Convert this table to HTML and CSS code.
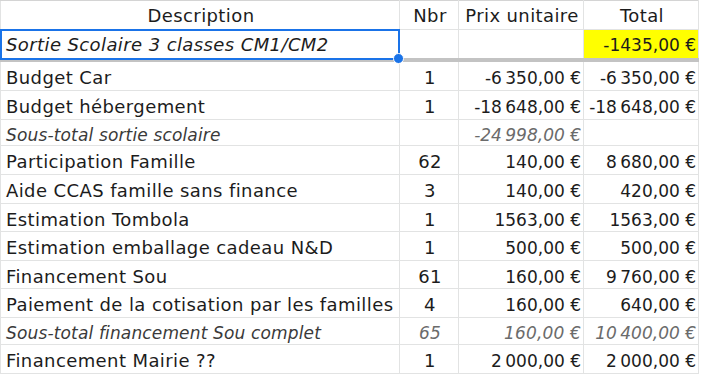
FILE: index.html
```html
<!DOCTYPE html>
<html lang="fr">
<head>
<meta charset="utf-8">
<link rel="stylesheet" href="styles.css">
</head>
<body>
<table class="sheet">
  <colgroup>
    <col class="c-desc"><col class="c-nbr"><col class="c-prix"><col class="c-total">
  </colgroup>
  <tr class="head">
    <td class="center">Description</td><td class="center">Nbr</td><td class="center">Prix unitaire</td><td class="center">Total</td>
  </tr>
  <tr class="first">
    <td class="sel it">Sortie Scolaire 3 classes CM1/CM2<span class="handle"></span></td><td></td><td></td><td class="num yellow">-1435,00 €</td>
  </tr>
  <tr class="row"><td>Budget Car</td><td class="center">1</td><td class="num">-6&#8239;350,00 €</td><td class="num">-6&#8239;350,00 €</td></tr>
  <tr class="row"><td>Budget hébergement</td><td class="center">1</td><td class="num">-18&#8239;648,00 €</td><td class="num">-18&#8239;648,00 €</td></tr>
  <tr class="sub"><td class="it">Sous-total sortie scolaire</td><td></td><td class="num it grey">-24&#8239;998,00 €</td><td></td></tr>
  <tr class="row"><td>Participation Famille</td><td class="center">62</td><td class="num">140,00 €</td><td class="num">8&#8239;680,00 €</td></tr>
  <tr class="row"><td>Aide CCAS famille sans finance</td><td class="center">3</td><td class="num">140,00 €</td><td class="num">420,00 €</td></tr>
  <tr class="row short"><td>Estimation Tombola</td><td class="center">1</td><td class="num">1563,00 €</td><td class="num">1563,00 €</td></tr>
  <tr class="row"><td>Estimation emballage cadeau N&amp;D</td><td class="center">1</td><td class="num">500,00 €</td><td class="num">500,00 €</td></tr>
  <tr class="row short"><td>Financement Sou</td><td class="center">61</td><td class="num">160,00 €</td><td class="num">9&#8239;760,00 €</td></tr>
  <tr class="row"><td>Paiement de la cotisation par les familles</td><td class="center">4</td><td class="num">160,00 €</td><td class="num">640,00 €</td></tr>
  <tr class="sub tall"><td class="it">Sous-total financement Sou complet</td><td class="center it grey">65</td><td class="num it grey">160,00 €</td><td class="num it grey">10&#8239;400,00 €</td></tr>
  <tr class="row"><td>Financement Mairie ??</td><td class="center">1</td><td class="num">2&#8239;000,00 €</td><td class="num">2&#8239;000,00 €</td></tr>
</table>
</body>
</html>
```
FILE: styles.css
```css
html, body {
  margin: 0;
  padding: 0;
  background: #ffffff;
}
.sheet {
  border-collapse: collapse;
  table-layout: fixed;
  width: 698px;
  font-family: "DejaVu Sans", sans-serif;
  font-size: 18px;
  color: #1c1c1c;
}
.c-desc { width: 399px; }
.c-nbr { width: 59px; }
.c-prix { width: 125px; }
.c-total { width: 115px; }
.sheet td {
  border: 1px solid #e2e3e3;
  padding: 2px 3px 0 5px;
  white-space: nowrap;
  overflow: visible;
  line-height: 20px;
  letter-spacing: 0.4px;
}
.sheet td.num {
  padding-right: 2px;
  font-size: 17px;
  letter-spacing: 0;
}
.sheet .sub td {
  font-size: 17px;
  letter-spacing: 0.15px;
}
.head td { height: 26px; border-top-color: #d4d4d4; }
.first td { height: 26px; border-bottom: 4px solid #c3c3c3; }
.sheet .row td, .sheet .sub td { padding-top: 4px; }
.row td { height: 24px; }
.row.short td { height: 23px; }
.sub td { height: 21px; }
.sub.tall td { height: 22px; }
.center { text-align: center; }
.num { text-align: right; }
.it { font-style: italic; }
.grey { color: #6b6b6b; }
.sub td.it:first-child { color: #3a3a3a; }
.yellow { background: #ffff00; }
.sel { position: relative; }
.sel::after {
  content: "";
  position: absolute;
  left: -1px;
  top: -1px;
  right: -1px;
  bottom: -2px;
  border: 2px solid #1a73e8;
  pointer-events: none;
}
.handle {
  position: absolute;
  right: -5px;
  bottom: -6px;
  width: 9px;
  height: 9px;
  border-radius: 50%;
  background: #1a73e8;
  border: 1px solid #ffffff;
  z-index: 2;
}
```
